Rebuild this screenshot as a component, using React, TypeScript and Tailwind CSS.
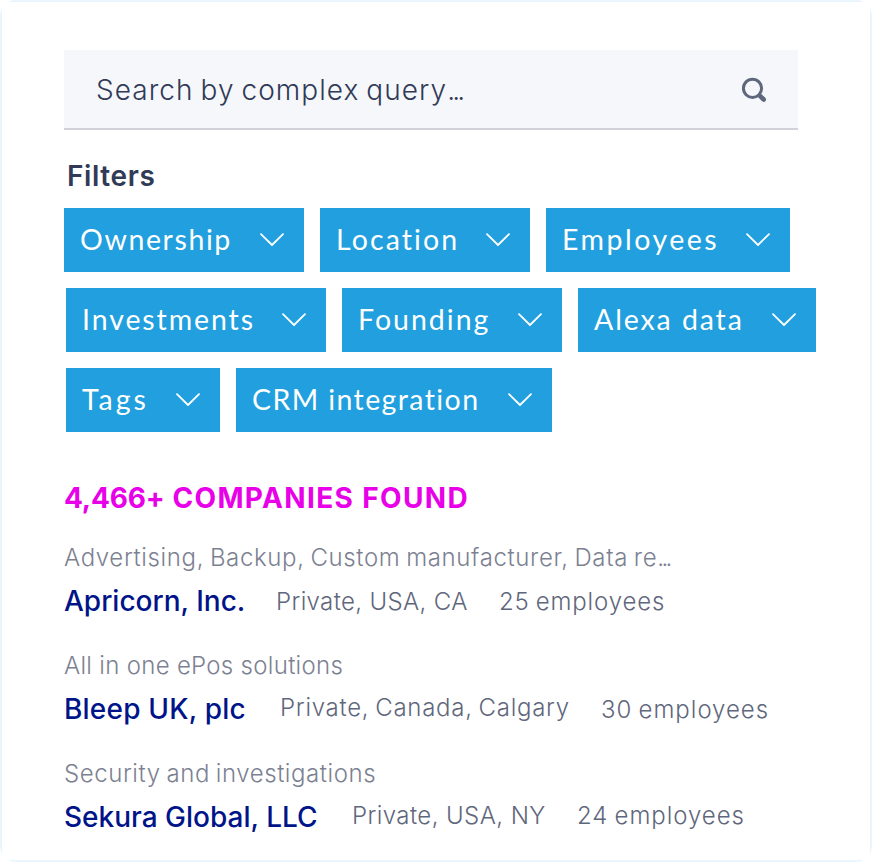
interface Filter {
  label: string;
  width: string;
  tracking: string;
}

interface Company {
  name: string;
  nameClass: string;
  about: string;
  truncated?: boolean;
  aboutClass: string;
  location: string;
  locationClass: string;
  employees: string;
  employeesClass: string;
}

const filterRows: Filter[][] = [
  [
    { label: "Ownership", width: "w-[240px]", tracking: "tracking-[1.6px]" },
    { label: "Location", width: "w-[210px]", tracking: "tracking-[2.1px]" },
    { label: "Employees", width: "w-[244px]", tracking: "tracking-[2.5px]" },
  ],
  [
    { label: "Investments", width: "w-[260px]", tracking: "tracking-[1.9px]" },
    { label: "Founding", width: "w-[220px]", tracking: "tracking-[2px]" },
    { label: "Alexa data", width: "w-[238px]", tracking: "tracking-[1.9px]" },
  ],
  [
    { label: "Tags", width: "w-[154px]", tracking: "tracking-[3px]" },
    { label: "CRM integration", width: "w-[316px]", tracking: "tracking-[1.4px]" },
  ],
];

const companies: Company[] = [
  {
    name: "Apricorn, Inc.",
    nameClass: "w-[212px] tracking-[0px]",
    about: "Advertising, Backup, Custom manufacturer, Data re",
    truncated: true,
    aboutClass: "tracking-[0.63px] [word-spacing:-1.5px]",
    location: "Private, USA, CA",
    locationClass: "w-[223px] pt-[2px] tracking-[0.36px]",
    employees: "25 employees",
    employeesClass: "pt-[2px] tracking-[0.85px] [word-spacing:-1.5px]",
  },
  {
    name: "Bleep UK, plc",
    nameClass: "w-[216px] tracking-[0.2px]",
    about: "All in one ePos solutions",
    aboutClass: "tracking-[0.3px]",
    location: "Private, Canada, Calgary",
    locationClass: "w-[321px] tracking-[0.72px] [word-spacing:-1.5px]",
    employees: "30 employees",
    employeesClass: "pt-[2px] tracking-[0.98px] [word-spacing:-1.5px]",
  },
  {
    name: "Sekura Global, LLC",
    nameClass: "w-[288px] tracking-[0px]",
    about: "Security and investigations",
    aboutClass: "tracking-[0.57px] [word-spacing:-1.5px]",
    location: "Private, USA, NY",
    locationClass: "w-[225px] tracking-[0.42px]",
    employees: "24 employees",
    employeesClass: "tracking-[0.95px] [word-spacing:-1.5px]",
  },
];

function SearchIcon() {
  return (
    <svg className="mt-[2px]" width="26" height="26" viewBox="0 0 26 26" fill="none" stroke="#5f677c">
      <circle cx="11.5" cy="11.3" r="9.1" strokeWidth="3" />
      <path d="M17.6 17.6L22.6 22.4" strokeWidth="4.6" />
      <path d="M22 21.8L22.8 22.6" strokeWidth="4.4" strokeLinecap="round" />
    </svg>
  );
}

function Chevron() {
  return (
    <svg width="24" height="14" viewBox="0 0 24 14" fill="none" stroke="white" strokeWidth="1.8" strokeLinecap="round" strokeLinejoin="round">
      <path d="M1 1.2L12 12L23 1.2" />
    </svg>
  );
}

export default function App() {
  return (
    <div className="h-[862px] w-[872px] overflow-hidden rounded-[16px] bg-[#e9f6fe] p-[2px] font-['Inter',sans-serif] whitespace-nowrap">
      <div className="h-full rounded-[4px] bg-white px-[62px] pt-12">
        {/* Search */}
        <div className="flex h-20 w-[734px] items-center justify-between border-b-2 border-[#d1d1d9] bg-[#f5f7fb] pr-[31px] pl-8">
          <span className="pt-px text-[28px] leading-[40px] font-light tracking-[1.05px] text-[#313a56] [word-spacing:-2px]">
            Search by complex query<span className="tracking-[-2.8px]">...</span>
          </span>
          <SearchIcon />
        </div>

        {/* Filters */}
        <h2 className="mt-[26px] h-[52px] pl-[3px] text-[28px] leading-[40px] font-semibold tracking-[0.6px] text-[#313a56]">Filters</h2>
        <div className="flex flex-col gap-4">
          {filterRows.map((row, i) => (
            <div key={i} className={i === 0 ? "flex gap-4" : "ml-[2px] flex gap-4"}>
              {row.map((filter) => (
                <button
                  key={filter.label}
                  className={`flex h-16 shrink-0 items-center justify-between bg-[#219fde] pr-5 pl-4 font-['Lato',sans-serif] text-[28.5px] text-white ${filter.width} ${filter.tracking}`}
                >
                  <span className="pb-px">{filter.label}</span>
                  <Chevron />
                </button>
              ))}
            </div>
          ))}
        </div>

        {/* Results */}
        <h1 className="mt-[46px] text-[28px] leading-[40px] font-bold tracking-[1.35px] text-[#e800e8]">
          <span className="tracking-[-0.2px]">4,466+</span> COMPANIES FOUND
        </h1>
        <div className="mt-[20px] flex flex-col gap-[28px]">
          {companies.map((company) => (
            <div key={company.name} className="h-20">
              <p className={`h-10 text-[24px] leading-[40px] font-light text-[#7c8192] ${company.aboutClass}`}>
                {company.about}
                {company.truncated && <span className="tracking-[-2.6px]">...</span>}
              </p>
              <div className="flex h-10 text-[24px] leading-[44px] font-light text-[#5f677c]">
                <span className={`shrink-0 text-[28px] leading-[46px] font-medium text-[#001489] ${company.nameClass}`}>{company.name}</span>
                <span className={`shrink-0 ${company.locationClass}`}>{company.location}</span>
                <span className={company.employeesClass}>{company.employees}</span>
              </div>
            </div>
          ))}
        </div>
      </div>
    </div>
  );
}
